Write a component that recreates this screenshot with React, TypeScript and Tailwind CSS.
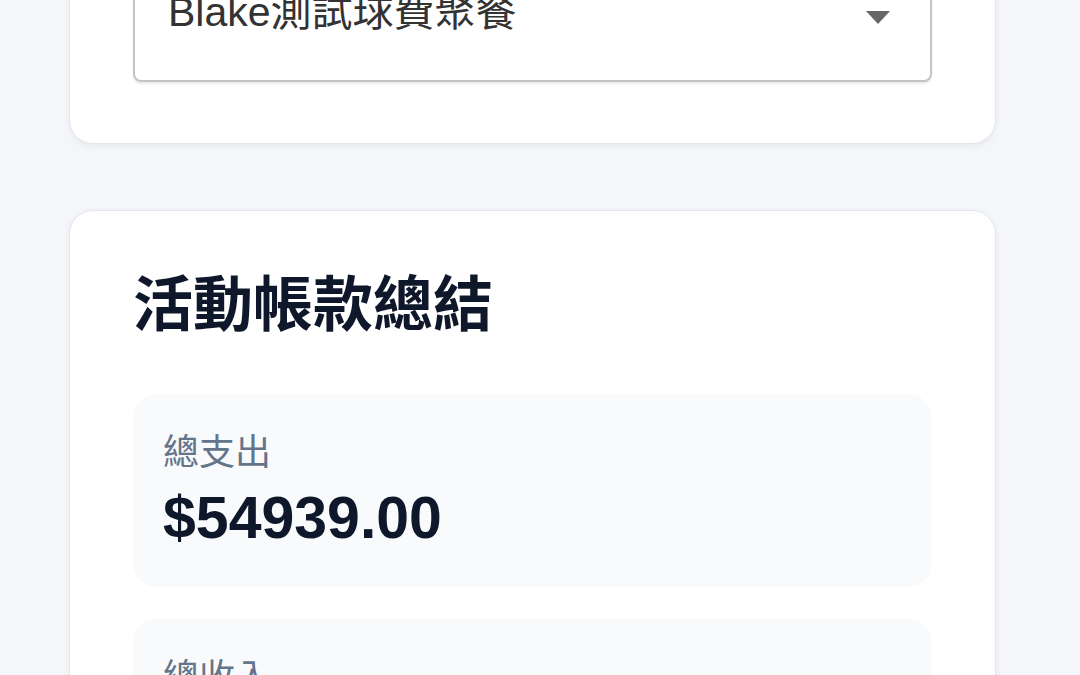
const font = { fontFamily: '"Liberation Sans", "Noto Sans CJK TC", sans-serif' };

function StatBox({ label, value }: { label: string; value: string }) {
  return (
    <div className="rounded-[24px] bg-[#f8fafc] pl-[30px] pr-8 pt-8 pb-[33px]">
      <div className="text-[36px] leading-[54px] text-[#64748b]">{label}</div>
      <div className="mt-[2px] text-[59px] font-bold leading-[72px] text-[#0f172a]">{value}</div>
    </div>
  );
}

export default function App() {
  return (
    <div className="min-h-screen bg-[#f4f6f9] overflow-hidden" style={font}>
      <div className="ml-[69px] w-[927px] -mt-[112px] flex flex-col gap-[66px] pb-10">
        <div className="rounded-[24px] border border-[#e3e7ec] bg-white px-[63px] pt-[63px] pb-[61px] shadow-[0_2px_6px_rgba(0,0,0,0.06)]">
          <div className="flex h-[130px] items-center justify-between rounded-[8px] border-2 border-[#c4c4c4] bg-white pl-[33px] pr-[40px] shadow-[0_2px_2px_rgba(0,0,0,0.08)]">
            <span className="mb-[10px] text-[41px] leading-none text-[#333333]">Blake測試球費聚餐</span>
            <svg width="24" height="13" viewBox="0 0 24 13">
              <path d="M0 0H24L12 13Z" fill="#666666" />
            </svg>
          </div>
        </div>

        <div className="rounded-[24px] border border-[#e3e7ec] bg-white px-[63px] pt-[59px] pb-[63px] shadow-[0_2px_6px_rgba(0,0,0,0.06)]">
          <h2 className="text-[60px] font-bold leading-[72px] text-[#0f172a]">活動帳款總結</h2>
          <div className="mt-[52px] flex flex-col gap-8">
            <StatBox label="總支出" value="$54939.00" />
            <StatBox label="總收入" value="$0.00" />
            <StatBox label="結餘" value="$-54939.00" />
          </div>
        </div>
      </div>
    </div>
  );
}
